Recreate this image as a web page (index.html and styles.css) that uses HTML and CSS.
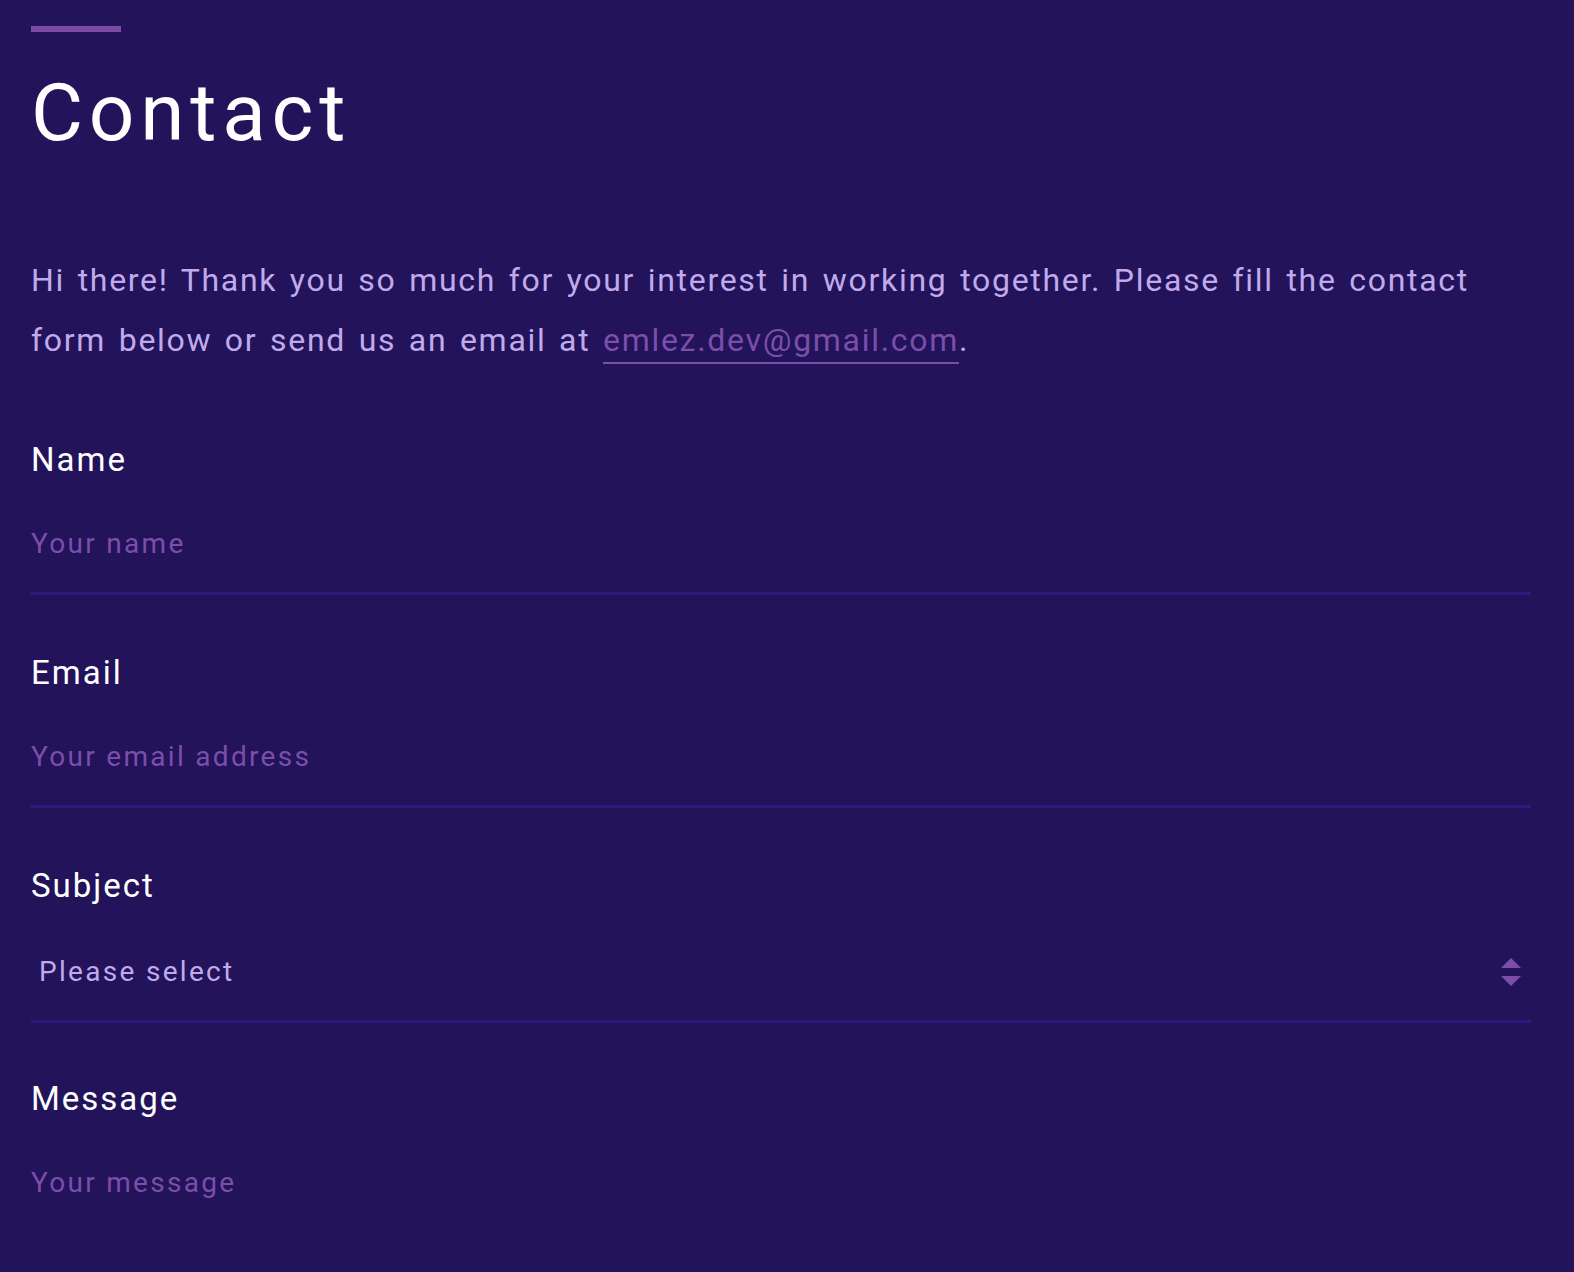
FILE: index.html
```html
<!DOCTYPE html>
<html lang="en">
<head>
<meta charset="utf-8">
<title>Contact</title>
<link rel="stylesheet" href="styles.css">
</head>
<body>
<main class="page">
  <h1 class="title">Contact</h1>
  <p class="intro">Hi there! Thank you so much for your interest in working together. Please fill the contact form below or send us an email at <a class="mail" href="#">emlez.dev@gmail.com</a>.</p>
  <form class="form">
    <div class="field">
      <label class="label" for="name">Name</label>
      <input class="input" id="name" type="text" placeholder="Your name">
    </div>
    <div class="field">
      <label class="label" for="email">Email</label>
      <input class="input" id="email" type="email" placeholder="Your email address">
    </div>
    <div class="field field-select">
      <label class="label" for="subject">Subject</label>
      <div class="select-wrap">
        <select class="input select" id="subject">
          <option>Please select</option>
          <option>Project</option>
          <option>Other</option>
        </select>
        <svg class="arrows" width="20" height="28" viewBox="0 0 20 28" aria-hidden="true">
          <polygon points="10,0 20,10 0,10" />
          <polygon points="0,18 20,18 10,28" />
        </svg>
      </div>
    </div>
    <div class="field">
      <label class="label" for="message">Message</label>
      <textarea class="input textarea" id="message" placeholder="Your message"></textarea>
    </div>
  </form>
</main>
</body>
</html>
```
FILE: styles.css
```css
html, body {
  margin: 0;
  padding: 0;
  background: #22135a;
}
body {
  font-family: Roboto, "Liberation Sans", sans-serif;
  color: #ffffff;
  height: 1272px;
  overflow: hidden;
}
.page {
  padding: 26px 43px 0 31px;
}
.title {
  margin: 0;
  font-size: 80px;
  font-weight: 400;
  line-height: 80px;
  letter-spacing: 5.8px;
  color: #ffffff;
}
.title::before {
  content: "";
  display: block;
  width: 90px;
  height: 6px;
  background: #7b4ba5;
  margin-bottom: 41px;
}
.intro {
  margin: 97px 0 0 0;
  font-size: 32px;
  line-height: 60px;
  letter-spacing: 1.7px;
  word-spacing: 3px;
  color: #c0aaeb;
  max-width: 1470px;
}
.mail {
  color: #7b4eaa;
  text-decoration: none;
  border-bottom: 2px solid #7b4eaa;
  padding-bottom: 3px;
}
.form {
  margin-top: 70px;
}
.field {
  margin-bottom: 58px;
}
.field-select {
  margin-bottom: 56px;
}
.label {
  display: block;
  font-size: 33px;
  line-height: 40px;
  letter-spacing: 2px;
  color: #ffffff;
}
.input {
  display: block;
  box-sizing: content-box;
  width: 100%;
  margin: 24px 0 0 0;
  padding: 20px 0 28px 0;
  border: 0;
  border-bottom: 3px solid #2d1a7e;
  background: transparent;
  font-family: Roboto, "Liberation Sans", sans-serif;
  font-size: 28px;
  line-height: 40px;
  height: 40px;
  letter-spacing: 2.3px;
  color: #c0aaeb;
  outline: none;
  border-radius: 0;
}
.input::placeholder {
  color: #7b4eaa;
  opacity: 1;
}
.select-wrap {
  position: relative;
  margin-top: 26px;
}
.select {
  appearance: none;
  -webkit-appearance: none;
  margin-top: 0;
  padding-left: 8px;
  width: 100%;
  box-sizing: border-box;
  height: 91px;
  padding-top: 20px;
  padding-bottom: 28px;
}
.arrows {
  position: absolute;
  right: 10px;
  top: 26px;
  fill: #7b4eaa;
}
.textarea {
  resize: none;
  height: 120px;
}
```
